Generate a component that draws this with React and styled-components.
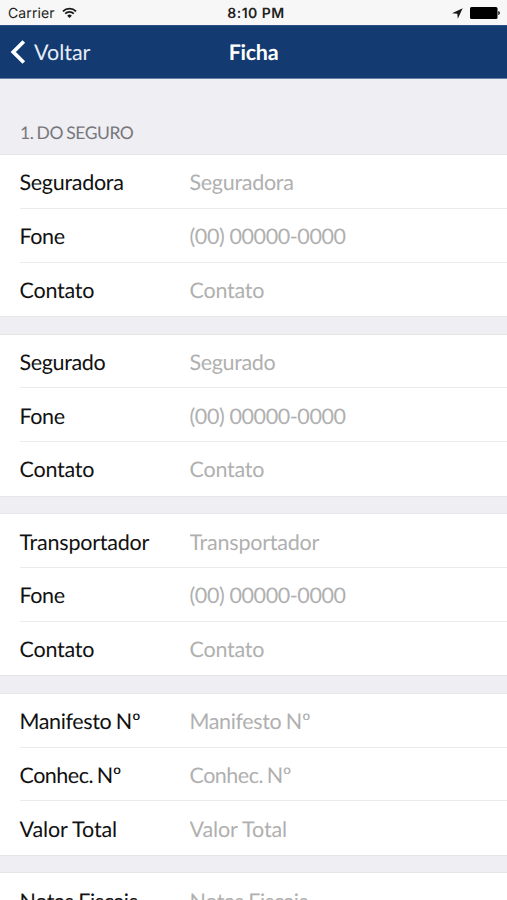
import React from "react";
import styled, { createGlobalStyle } from "styled-components";

const GlobalStyle = createGlobalStyle`
  * { box-sizing: border-box; }
  html, body { margin: 0; padding: 0; background: #efeef3; overflow: hidden; }
`;

const Screen = styled.div`
  width: 507px;
  height: 900px;
  overflow: hidden;
  display: flex;
  flex-direction: column;
  background: #efeef3;
  font-family: Lato, sans-serif;
  text-rendering: geometricPrecision;
`;

const StatusBar = styled.div`
  flex: none;
  display: grid;
  grid-template-columns: 1fr auto 1fr;
  align-items: center;
  height: 25px;
  padding: 2px 7px 0 8px;
  background: #f7f7f7;
  color: #222;
  font: 400 14px/20px Inter, sans-serif;
`;

const Carrier = styled.div`
  display: flex;
  align-items: center;
  gap: 7px;
  letter-spacing: 0.12px;
  svg { margin-bottom: 2px; }
`;

const Clock = styled.div`
  font-weight: 600;
  font-size: 14px;
  padding-left: 4px;
  letter-spacing: 0.5px;
`;

const Indicators = styled.div`
  display: flex;
  align-items: center;
  justify-content: flex-end;
  gap: 7px;
  padding-bottom: 1px;
`;

const NavBar = styled.header`
  flex: none;
  display: grid;
  grid-template-columns: 1fr auto 1fr;
  align-items: center;
  height: 54px;
  padding: 0 10px;
  background: #133b71;
  border-top: 1px solid #2c5083;
  border-bottom: 1px solid #647ea6;
  color: #fff;
`;

const BackButton = styled.button`
  display: flex;
  align-items: center;
  gap: 8px;
  padding: 0;
  border: 0;
  background: none;
  color: #e6edf7;
  font: 400 21.5px/26px Lato, sans-serif;
  text-rendering: geometricPrecision;
`;

const Title = styled.h1`
  margin: 0;
  font-size: 21.5px;
  line-height: 26px;
  font-weight: 700;
  letter-spacing: -0.3px;
`;

const SectionTitle = styled.h2`
  flex: none;
  height: 76px;
  margin: 0;
  padding: 43px 20px 0;
  color: #77777b;
  font-size: 17.5px;
  line-height: 22px;
  font-weight: 400;
  letter-spacing: -0.45px;
  word-spacing: -0.8px;
`;

const Form = styled.form`
  display: flex;
  flex-direction: column;
  gap: 18.35px;
`;

const Group = styled.div`
  flex: none;
  box-shadow: 0 -1px #e6e6e9, 0 1px #e6e6e9;
  background: #fff;
`;

const Row = styled.label`
  display: flex;
  align-items: center;
  height: 53.75px;
  padding-top: 2px;
  margin-left: 19.5px;
  border-bottom: 1px solid ${(p) => (p.$last ? "transparent" : "#ebebed")};
  letter-spacing: ${(p) => p.$tracking}px;
  word-spacing: ${(p) => p.$wordSpacing}px;
`;

const Label = styled.span`
  flex: none;
  width: 170px;
  color: #111;
  font-size: 21.5px;
  line-height: 26px;
`;

const Field = styled.input`
  flex: 1;
  min-width: 0;
  padding: 0;
  border: 0;
  outline: 0;
  background: none;
  font: 400 21.5px/26px Lato, sans-serif;
  letter-spacing: inherit;
  word-spacing: inherit;
  text-rendering: geometricPrecision;
  &::placeholder { color: #b0b0b0; opacity: 1; }
`;

const phone = {
  label: "Fone",
  placeholder: "(00) 00000-0000",
  tracking: -0.4,
  wordSpacing: 0,
};
const contact = { label: "Contato" };
const groups = [
  [{ label: "Seguradora", tracking: -0.3 }, phone, contact],
  [{ label: "Segurado", tracking: -0.35 }, phone, contact],
  [{ label: "Transportador" }, phone, contact],
  [
    { label: "Manifesto Nº", tracking: -0.38, wordSpacing: -0.5 },
    { label: "Conhec. Nº", tracking: -0.5, wordSpacing: -1.3 },
    { label: "Valor Total", tracking: -0.1, wordSpacing: 0 },
  ],
  [{ label: "Notas Fiscais", tracking: -0.36, wordSpacing: -0.5 }],
];

const Wifi = () => (
  <svg width="15" height="11.5" viewBox="0 0 16 12" fill="none" stroke="#181818" strokeWidth="1.9">
    <path d="M1 4.5a10 10 0 0 1 14 0M3.4 7a6.6 6.6 0 0 1 9.2 0" />
    <path d="M8 11.6 5.5 9.1a3.6 3.6 0 0 1 5 0Z" fill="#181818" stroke="none" />
  </svg>
);

const Location = () => (
  <svg width="11" height="11" viewBox="0 0 11 11">
    <path d="M10.7.3 0 5.2l5.3.5.5 5.1Z" fill="#181818" />
  </svg>
);

const Battery = () => (
  <svg width="30" height="12" viewBox="0 0 30 12">
    <rect x="0" y="0" width="27.5" height="12" rx="1.5" />
    <path d="M28.3 4c2 .6 2 3.4 0 4Z" />
  </svg>
);

const Chevron = () => (
  <svg width="16" height="24" viewBox="0 0 16 24" fill="none" stroke="#fff" strokeWidth="3.8">
    <path d="M13.8 1.5 3.3 12l10.5 10.5" />
  </svg>
);

export default function App() {
  return (
    <>
      <GlobalStyle />
      <Screen>
        <StatusBar>
          <Carrier>Carrier <Wifi /></Carrier>
          <Clock>8:10 PM</Clock>
          <Indicators><Location /><Battery /></Indicators>
        </StatusBar>
        <NavBar>
          <BackButton type="button"><Chevron />Voltar</BackButton>
          <Title>Ficha</Title>
        </NavBar>
        <SectionTitle>1. DO SEGURO</SectionTitle>
        <Form>
          {groups.map((rows, g) => (
            <Group key={g}>
              {rows.map(({ label, placeholder = label, tracking = -0.22, wordSpacing = 0 }, i) => (
                <Row key={label} $last={i === 2} $tracking={tracking} $wordSpacing={wordSpacing}>
                  <Label>{label}</Label>
                  <Field placeholder={placeholder} />
                </Row>
              ))}
            </Group>
          ))}
        </Form>
      </Screen>
    </>
  );
}
